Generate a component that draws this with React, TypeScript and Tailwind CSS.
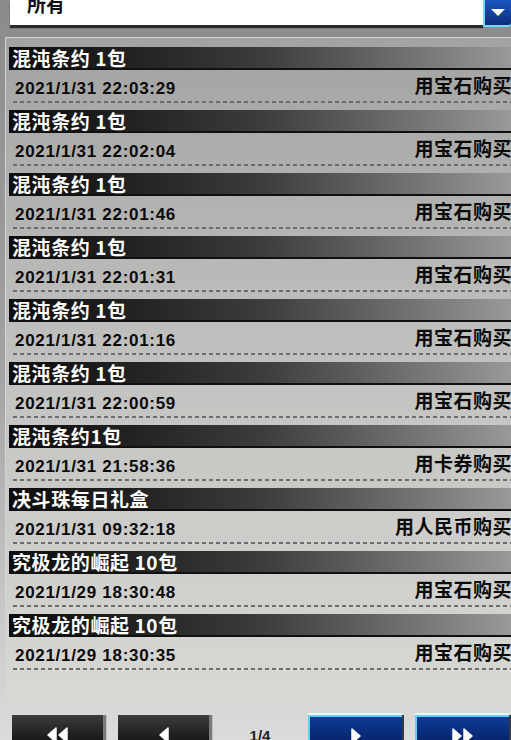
import React from 'react'

const rows = [
  { title: '混沌条约 1包', time: '2021/1/31 22:03:29', method: '用宝石购买' },
  { title: '混沌条约 1包', time: '2021/1/31 22:02:04', method: '用宝石购买' },
  { title: '混沌条约 1包', time: '2021/1/31 22:01:46', method: '用宝石购买' },
  { title: '混沌条约 1包', time: '2021/1/31 22:01:31', method: '用宝石购买' },
  { title: '混沌条约 1包', time: '2021/1/31 22:01:16', method: '用宝石购买' },
  { title: '混沌条约 1包', time: '2021/1/31 22:00:59', method: '用宝石购买' },
  { title: '混沌条约1包', time: '2021/1/31 21:58:36', method: '用卡券购买' },
  { title: '决斗珠每日礼盒', time: '2021/1/31 09:32:18', method: '用人民币购买' },
  { title: '究极龙的崛起 10包', time: '2021/1/29 18:30:48', method: '用宝石购买' },
  { title: '究极龙的崛起 10包', time: '2021/1/29 18:30:35', method: '用宝石购买' },
]

const cjk = "font-['Noto_Sans_CJK_SC',sans-serif]"

function Arrows({ dir, count }: { dir: 'left' | 'right'; count: number }) {
  const tri = (x: number) =>
    dir === 'left'
      ? `${x + 8},2 ${x},9 ${x + 8},16`
      : `${x},2 ${x + 8},9 ${x},16`
  return (
    <svg width={count === 2 ? 22 : 10} height="18" viewBox={`0 0 ${count === 2 ? 22 : 10} 18`}>
      <polygon points={tri(1)} fill="#fff" stroke="#fff" strokeWidth="1.5" strokeLinejoin="round" />
      {count === 2 && <polygon points={tri(12)} fill="#fff" stroke="#fff" strokeWidth="1.5" strokeLinejoin="round" />}
    </svg>
  )
}

function DarkButton({ count }: { count: number }) {
  return (
    <div className="w-[94px] h-[28px] flex justify-center pt-[11px] bg-gradient-to-b from-[#3c3c3c] to-[#161616] border-r-[3px] border-[#7a7a7a] shadow-[1px_0_0_#bdbdbd]">
      <Arrows dir="left" count={count} />
    </div>
  )
}

function BlueButton({ count }: { count: number }) {
  return (
    <div className="w-[94px] h-[28px] flex justify-center pt-[10px] bg-gradient-to-b from-[#0d3b94] to-[#06246a] border-t-2 border-l-2 border-[#5fd2f2] shadow-[0_-2px_0_#f4f4f4,2px_0_0_#3a3a3a]">
      <Arrows dir="right" count={count} />
    </div>
  )
}

export default function App() {
  return (
    <div className="w-[511px] h-[740px] overflow-hidden bg-gradient-to-b from-[#8b8b8b] via-[#a3a3a3] to-[#dcdcdc]">
      {/* Filter dropdown */}
      <div className="h-[37px] flex">
        <div className="ml-[10px] w-[473px] h-[25px] bg-white overflow-hidden shadow-[0_3px_1px_#2a2a2a]">
          <div className={`${cjk} ml-[17px] -mt-[7px] text-[19px] leading-[22px] font-bold text-[#111]`}>所有</div>
        </div>
        <div className="w-[28px] h-[27px] flex justify-center pt-[9px] bg-gradient-to-b from-[#1b56c0] to-[#0b2e7c] border-l-2 border-b-2 border-[#6fd8f6] rounded-br-[4px]">
          <svg width="14" height="8" viewBox="0 0 14 8">
            <polygon points="0,0 14,0 7,7" fill="#fff" />
          </svg>
        </div>
      </div>

      {/* History panel */}
      <div className="ml-[5px] h-[670px] border-t border-l border-[#d4d4d4] bg-gradient-to-b from-[#a3a3a3] via-[#c2c2c0] to-[#d8d8d5] pt-[9px]">
        {rows.map((r, i) => (
          <div key={i} className="h-[63px]">
            <div className="ml-[3px] h-[23px] border-b-2 border-[#101010] bg-gradient-to-r from-[#0c0c0c] via-[#3c3c3c] to-[#999999] flex items-center">
              <span className={`${cjk} ml-[3px] text-[19px] leading-none font-bold text-white tracking-[0.6px]`}>{r.title}</span>
            </div>
            <div className="h-[31px] flex items-center justify-between pt-[5px]">
              <span className="ml-[9px] font-['Liberation_Sans',sans-serif] font-bold text-[17px] leading-none tracking-[0.7px] text-[#0a0a0a]">{r.time}</span>
              <span className={`${cjk} text-[19px] leading-none font-bold tracking-[0.5px] text-[#0a0a0a] mr-[-1px] mb-[7px]`}>{r.method}</span>
            </div>
            <div className="ml-[7px] h-[2px] bg-[repeating-linear-gradient(90deg,#6c6c6c_0_4px,transparent_4px_7px)]" />
          </div>
        ))}
      </div>

      {/* Pagination */}
      <div className="flex items-start mt-[8px] pl-[12px]">
        <DarkButton count={2} />
        <div className="ml-[12px]"><DarkButton count={1} /></div>
        <div className="w-[96px] pt-[10px] text-center font-['Liberation_Sans',sans-serif] font-bold text-[15px] text-[#222]">1/4</div>
        <BlueButton count={1} />
        <div className="ml-[13px]"><BlueButton count={2} /></div>
      </div>
    </div>
  )
}
